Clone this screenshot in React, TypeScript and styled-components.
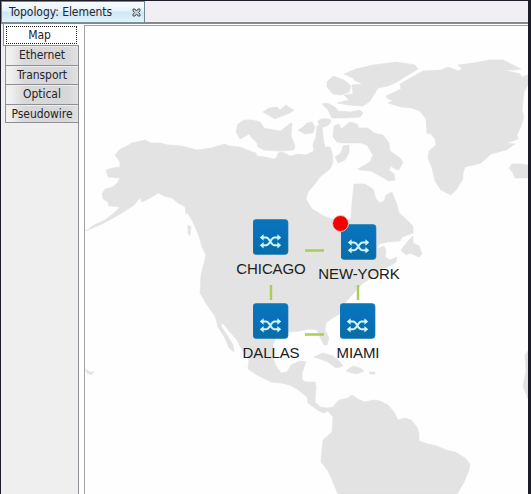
import React from "react";
import styled, { createGlobalStyle } from "styled-components";

const GlobalStyle = createGlobalStyle`
  * { box-sizing: border-box; }
  html, body { margin: 0; padding: 0; overflow: hidden; }
  body { background: #1c2029; }
`;

const uiFont = `"DejaVu Sans Condensed", "DejaVu Sans", sans-serif`;

const Window = styled.main`
  display: flex;
  flex-direction: column;
  width: 531px;
  height: 494px;
  border: solid #1c1c28;
  border-width: 1px 3px 0 1px;
  background: #fff;
  font-family: ${uiFont};
  font-stretch: condensed;
  color: #24242c;
`;

const TitleBar = styled.header`
  flex: none;
  display: flex;
  height: 23px;
  background: #f1eff4;
  border-bottom: 2px solid #85888c;
`;

const TitleTab = styled.div`
  display: flex;
  align-items: center;
  justify-content: space-between;
  width: 144px;
  height: 22px;
  padding: 0 3px 0 7px;
  border: 1px solid #6e8794;
  border-bottom-color: #7d9099;
  background: linear-gradient(#fafdff 0%, #e4f3fa 45%, #cde8f4 50%, #e1f2f9 100%);
`;

const Title = styled.span`
  font-size: 12px;
  line-height: 20px;
  letter-spacing: -0.05px;
  white-space: nowrap;
`;

const Body = styled.div`
  flex: 1;
  display: flex;
  min-height: 0;
`;

const Sidebar = styled.nav`
  display: flex;
  flex-direction: column;
  align-items: flex-end;
  flex: none;
  width: 78px;
  background: #efefef;
  border-right: 1px solid #8e8e94;
`;

const TabButton = styled.button<{ $selected?: boolean }>`
  flex: none;
  width: ${(p) => (p.$selected ? 76 : 73)}px;
  height: ${(p) => (p.$selected ? 22 : 19.5)}px;
  margin: 0 ${(p) => (p.$selected ? -1 : 0)}px 0 0;
  padding: ${(p) => (p.$selected ? "2px 1px 1px 2px" : "1px 0 0")};
  border: solid #8e9095;
  border-width: 0 0 1px 1px;
  background: ${(p) =>
    p.$selected ? "#fff" : "linear-gradient(90deg, #f0f0f0 0 4px, #d9d9d9 18px, #d7d7d7 85%, #e2e2e2)"};
  box-shadow: ${(p) => (p.$selected ? "none" : "inset 0 1px #ececec")};
  color: inherit;
  font-family: inherit;
  font-stretch: inherit;
  font-size: 12px;
  line-height: 17px;
  letter-spacing: -0.05px;
  text-align: center;
  white-space: nowrap;

  &:last-child {
    height: 18.5px;
  }
`;

const FocusRing = styled.span`
  display: block;
  height: 18px;
  line-height: 17px;
  margin-right: 1px;
  padding-right: 4px;
  border: 1px dotted #222;
`;

const MapPane = styled.section`
  flex: 1;
  margin: 1px 0 0 5px;
  border: solid #a3a3a5;
  border-width: 1px 0 0 1px;
  position: relative;
  overflow: hidden;
  background: #fefefe;
`;

const MapArt = styled.svg`
  display: block;
  width: 443px;
  height: 468px;
`;

const Site = styled.div<{ $x: number; $y: number }>`
  position: absolute;
  left: ${(p) => p.$x}px;
  top: ${(p) => p.$y}px;
  width: 100px;
  display: flex;
  flex-direction: column;
  align-items: center;
`;

const SiteIcon = styled.svg`
  display: block;
  width: 36px;
  height: 36px;
`;

const SiteLabel = styled.span`
  margin-top: 4px;
  font: 15px/20px "Liberation Sans", Arial, sans-serif;
  letter-spacing: -0.1px;
  color: #202020;
  white-space: nowrap;
`;

const Alarm = styled.i`
  position: absolute;
  left: 23px;
  top: -9px;
  width: 17px;
  height: 17px;
  border: 1px solid #f6c4c4;
  border-radius: 50%;
  background: #f50000;
`;

const tabs = ["Map", "Ethernet", "Transport", "Optical", "Pseudowire"];

const sites = [
  { name: "CHICAGO", x: 136, y: 193 },
  { name: "NEW-YORK", x: 224, y: 198, alarm: true },
  { name: "DALLAS", x: 136, y: 277 },
  { name: "MIAMI", x: 223, y: 277 },
];

const land = [
  // North and South America
  "M115 155L119 150 125 147 132 143 145 140 151 143 160 143 168 145 182 146 197 150 211 148 225 144 229 146 240 147 250 151 256 153 257 156 265 157 274 159 277 157 278 153 282 152 290 156 298 154 306 155 314 151 313 144 316 137 317 126 322 124 323 137 325 147 330 147 332 152 333 162 330 169 320 177 315 184 308 192 306 199 312 209 324 216 332 219 341 220 347 224 351 218 352 203 354 184 365 184 373 189 376 199 380 203 384 201 386 195 392 192 397 205 399 213 406 219 413 226 413 233 402 237 400 241 388 242 379 244 377 249 384 246 386 251 385 257 390 260 397 257 396 262 388 267 381 269 374 276 362 284 353 294 344 304 341 313 331 319 326 323 325 330 329 338 327 345 324 345 320 337 317 330 309 329 299 331 288 332 277 336 273 345 273 357 276 366 281 373 287 372 291 365 300 361 306 362 302 373 302 380 306 382 315 382 316 388 315 402 320 407 327 408 333 407 339 400 348 398 352 395 358 399 365 402 373 400 380 401 388 405 394 412 398 420 405 418 411 420 417 427 419 434 419 441 428 444 437 446 446 450 455 452 465 458 470 464 469 470 464 482 457 494H338L333 482 328 471 321 462 322 449 323 440 332 432 333 417 328 411 324 413 319 411 308 403 307 397 297 389 290 385 281 383 271 382 257 375 248 369 249 359 242 350 237 340 229 331 223 323 221 326 227 335 233 345 234 352 229 348 225 338 218 327 215 316 207 305 200 293 201 275 206 255 202 247 199 236 193 222 187 212 186 207 178 203 172 198 164 196 158 193 152 197 142 202 140 198 134 205 125 211 115 217 104 223 86 231 94 225 105 220 114 213 120 207 113 206 109 206 108 202 103 199 102 194 105 189 113 187 118 182 120 178 108 177 106 170 112 168 120 167 120 162Z",
  // Western and central Arctic islands
  "M236 132L238 124 244 120 252 120 260 122 264 128 274 130 281 131 289 124 292 123 291 136 295 146 294 150 279 151 264 150 258 147 257 143 252 138 249 134 244 137 240 139Z",
  "M263 112L269 108 277 107 280 110 286 105 290 108 294 110 290 113 282 116 275 119Z",
  "M298 130L303 127 307 123 312 122 315 127 313 133 305 134Z",
  "M318 123C317 118 327 118 331 120C330 125 326 127 323 127Z",
  "M322 104L327 103 335 107 338 111 350 112 360 110 363 113 360 117 346 118 332 118 328 110Z",
  "M327 82L333 76 344 80 351 86 349 92 341 95 333 94 327 87Z",
  "M344 74L356 69 373 65 397 62 415 65 418 69 408 75 397 82 388 86 378 88 375 93 370 101 363 106 348 105 337 103 349 100 344 95 353 94 352 85 363 84 354 80 353 78Z",
  // Baffin Island
  "M334 126L339 124 341 129 345 126 350 122 357 124 359 128 368 128 374 133 383 135 389 143 390 151 400 158 403 162 399 170 395 169 391 166 389 170 394 174 395 180 389 181 380 176 371 171 360 170 358 169 370 162 373 155 367 145 361 143 344 143 337 142 333 137Z",
  "M335 157L341 153 343 146 349 145 349 153 345 160 338 163Z",
  // Greenland
  "M386 96L401 89 400 84 414 76 423 71 441 70 448 67 456 70 459 71 462 68 458 65 473 63 490 60 503 60 521 69 514 70 504 70 520 74 522 77 528 75V85L524 92 522 110 524 117 521 126 517 135 518 139 507 143 515 144 506 150 491 154 481 163 465 167 463 173 463 179 456 190 451 195 441 190 435 181 432 168 428 158 429 151 436 145 435 139 430 133 427 134 426 119 420 111 412 108 401 107 388 103 393 101 387 98Z",
  // Iceland and the African coast
  "M509 168L512 164 521 164 528 165V178H515L513 173Z",
  "M528 351L525 355 526 371 523 386 528 399Z",
  // Newfoundland and Caribbean
  "M401 250L408 241 413 236 413 243 419 246 422 254 419 257 410 253 406 255Z",
  "M314 357L323 353 333 356 340 362 343 366 336 368 328 362 320 359Z",
  "M346 371L353 366 360 368 364 371 357 374 352 373Z",
  "M369 372H375V374H370Z",
  // Pacific islands
  "M85 369L90 372 94 372 91 375 87 373Z",
  "M185 207L188 206 189 212 186 214Z",
  "M188 225L191 227 190 236 188 233Z",
];

function CloseIcon() {
  return (
    <svg width="9" height="9" viewBox="0 0 9 9" aria-label="Close">
      <path d="M1 1h2l1.5 2L6 1h2v2L6.5 4.5 8 6v2H6L4.5 6 3 8H1V6l1.5-1.5L1 3Z" fill="#c3cdd2" stroke="#4d565d" />
    </svg>
  );
}

function SwitchIcon() {
  return (
    <SiteIcon viewBox="0 0 36 36">
      <defs>
        <linearGradient id="tile" x1="0" y1="0" x2="0" y2="1">
          <stop offset="0" stopColor="#0876b9" />
          <stop offset="0.45" stopColor="#0870bb" />
          <stop offset="1" stopColor="#096da5" />
        </linearGradient>
      </defs>
      <rect x="0" y="0.5" width="35" height="35" rx="3.2" fill="url(#tile)" stroke="#1d80ba" strokeOpacity="0.65" />
      <g fill="none" stroke="#d0f7f7" strokeWidth="2">
        <path d="M9 18.5h4c3.8 0 4.8 7.8 8.6 7.8h4.4M9 26.3h4c3.8 0 4.8-7.8 8.6-7.8h4.4" />
      </g>
      <path
        d="M6.8 18.5l3.8-3.3v6.6zM6.8 26.3l3.8-3.3v6.6zM28.2 18.5l-3.8-3.3v6.6zM28.2 26.3l-3.8-3.3v6.6z"
        fill="#d0f7f7"
      />
    </SiteIcon>
  );
}

export default function App() {
  return (
    <>
      <GlobalStyle />
      <Window>
        <TitleBar>
          <TitleTab>
            <Title>Topology: Elements</Title>
            <CloseIcon />
          </TitleTab>
        </TitleBar>
        <Body>
          <Sidebar>
            {tabs.map((tab, i) => (
              <TabButton key={tab} $selected={i === 0}>
                {i === 0 ? <FocusRing>{tab}</FocusRing> : tab}
              </TabButton>
            ))}
          </Sidebar>
          <MapPane>
            <MapArt viewBox="85 26 443 468">
              <g fill="#e3e3e3">
                {land.map((d) => (
                  <path key={d} d={d} stroke="#e3e3e3" strokeWidth="0.6" strokeLinejoin="round" />
                ))}
              </g>
              <g fill="none" stroke="#a7ce57" strokeWidth="2.4">
                <path d="M305 250.5H324M305 334.5H324M271 285V300M358 285V300" />
              </g>
            </MapArt>
            {sites.map((site) => (
              <Site key={site.name} $x={site.x} $y={site.y}>
                <SwitchIcon />
                <SiteLabel>{site.name}</SiteLabel>
                {site.alarm && <Alarm />}
              </Site>
            ))}
          </MapPane>
        </Body>
      </Window>
    </>
  );
}
